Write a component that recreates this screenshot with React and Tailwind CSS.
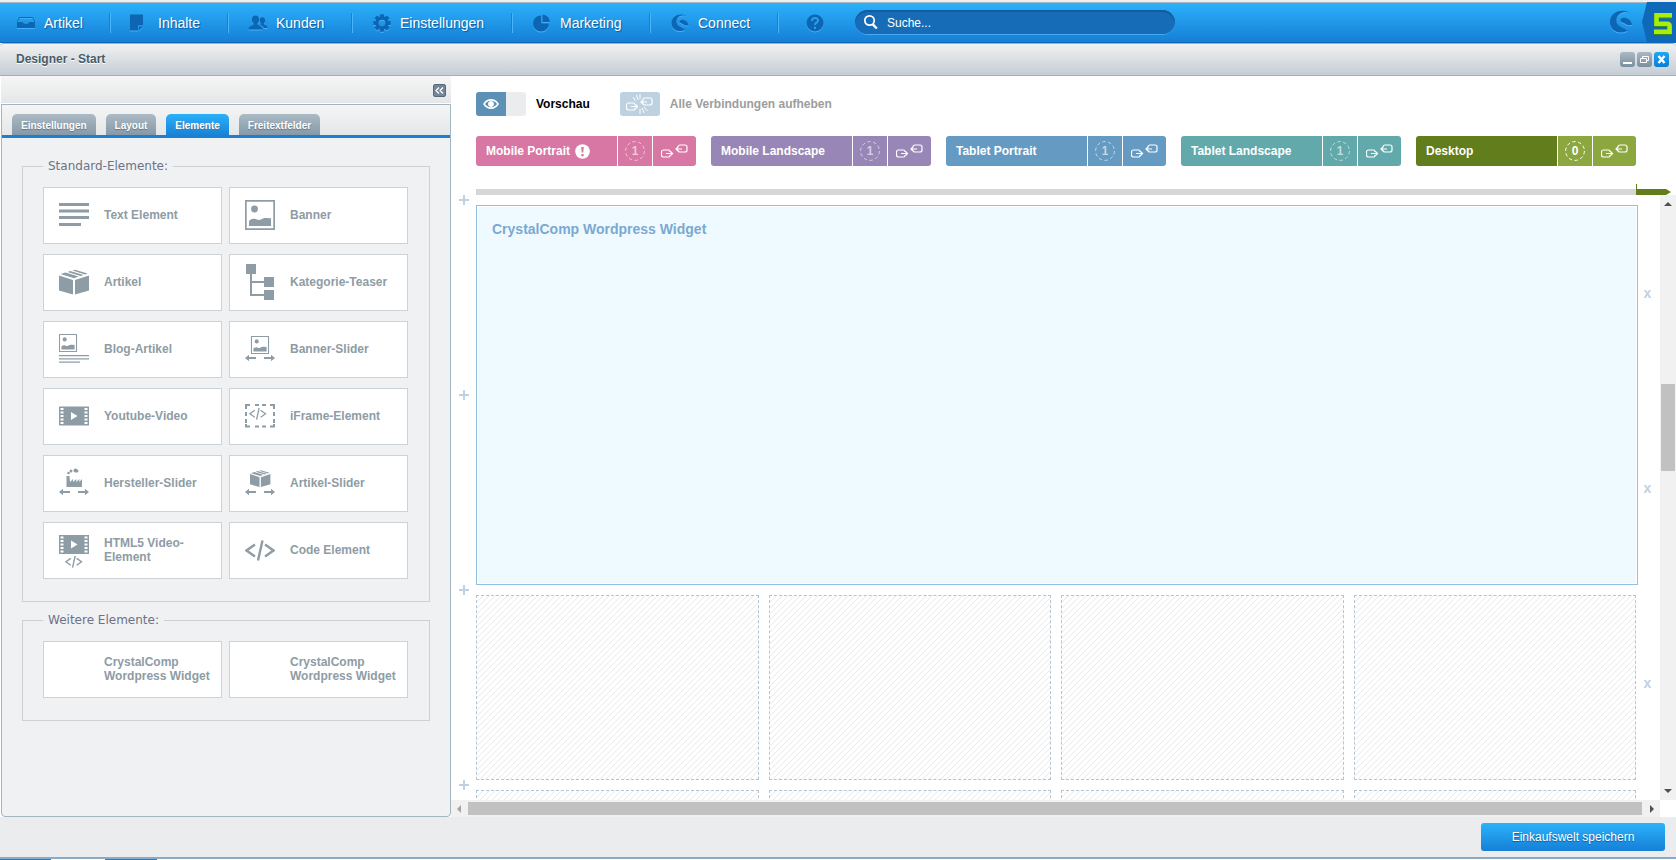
import React from "react";

const INK = "#8e9ca5";

function NavIcon({ kind }) {
  const c = "#0d66b4";
  return (
    <svg width="20" height="20" viewBox="0 0 20 20" fill={c} aria-hidden="true" className="shrink-0 drop-shadow-[0_1px_0_#45b0f7]">
      {kind === "inbox" && (
        <>
          <path d="M3.500 4.500h13l2 4v1h-4.500c-1 0-1.500 2-4 2S7 9.500 6 9.500H1.500v-1z" fill="none" stroke={c} strokeWidth="1" />
          <path d="M1 9h4.800c1 0 1.200 2.400 4.200 2.400s3.200-2.400 4.200-2.400H19v6H1z" />
        </>
      )}
      {kind === "page" && <path d="M0 1.500h13v11H8v5H0zM9 13.500h4l-4 4z" />}
      {kind === "users" && (
        <>
          <path d="M7.500 2.500c2.500 0 3.600 1.700 3.600 4 0 1.700-.6 3-1.500 3.900v1.400c1.500.9 5 1.400 5 4.700H.5c0-3.300 3.500-3.800 5-4.700v-1.400C4.500 9.500 3.900 8.200 3.900 6.500c0-2.300 1.100-4 3.600-4z" />
          <path d="M14.300 4.300c1.900 0 2.800 1.300 2.800 3.100 0 1.300-.5 2.300-1.200 3v1c1.200.7 3.600 1 3.600 3.700h-3.600c-.8-1.800-2.500-2.500-3.700-3.100l.5-2c-.7-.8-.9-1.700-.9-2.600 0-1.800.7-3.100 2.500-3.100z" />
        </>
      )}
      {kind === "gear" && (
        <>
          {[0, 45, 90, 135, 180, 225, 270, 315].map((a) => (
            <rect key={a} x="8" y="1.300" width="4" height="4" rx=".6" transform={`rotate(${a} 10 10)`} />
          ))}
          <circle cx="10" cy="10" r="5" fill="none" stroke={c} strokeWidth="3.400" />
        </>
      )}
      {kind === "pie" && <path d="M9 2.500v8h8a8 8 0 1 1-8-8zM10.500 1.500a8 8 0 0 1 7.500 7.500h-7.500z" />}
      {kind === "help" && (
        <>
          <circle cx="10" cy="10" r="8.500" />
          <path d="M7 8c0-4 6-4 6-.6C13 9.600 10 9.700 10 12M10 13.700v2.200" fill="none" stroke="#2a9ff0" strokeWidth="2" />
        </>
      )}
      {kind === "swirl" && <Swirl />}
    </svg>
  );
}

function Swirl() {
  return (
    <>
      <path d="M16.300 2.900C11 1 6.400 4.300 6.500 9c.1 4.300 4.700 5 8.700 7.600C10.500 19.800 1.500 18 1.500 10 1.500 2.500 10.500-.7 16.300 2.900z" />
      <path d="M9.500 8.800C9.500 5.500 17 6 18.600 12c-2 1.300-4 .2-5.600-.8-1.700-1-3.500-1-3.500-2.400z" />
    </>
  );
}

const NAV = [
  ["Artikel", "inbox", "w-[110px] pl-4"],
  ["Inhalte", "page", "w-[118px] pl-5"],
  ["Kunden", "users", "w-[124px] pl-5"],
  ["Einstellungen", "gear", "w-40 pl-5"],
  ["Marketing", "pie", "w-[138px] pl-5"],
  ["Connect", "swirl", "w-32 pl-5"],
];

function TopBar() {
  return (
    <header className="flex h-[43px] shrink-0 items-center border-t-2 border-b border-t-[#efefef] border-b-[#0c67b5] bg-linear-to-b from-[#2cb2fb] to-[#167fd6] shadow-[inset_0_1px_0_#a4b9c6]">
      <nav className="flex h-[22px] items-end">
        {NAV.map(([label, icon, size]) => (
          <a key={label} href="#" className={`flex h-5 items-center gap-2 border-r border-[#1b7fca] text-sm text-white shadow-[1px_0_0_#4ab5f8] [text-shadow:1px_1px_1px_#0c5a9e] ${size}`}>
            <NavIcon kind={icon} />
            {label}
          </a>
        ))}
        <a href="#" aria-label="Hilfe" className="flex w-[77px] items-center pl-[27px]">
          <NavIcon kind="help" />
        </a>
      </nav>
      <label className="flex h-[25px] w-80 items-center gap-2 rounded-full border-b border-[#47a9ee] bg-[#176cb8] pl-2 shadow-[inset_0_2px_1px_#145c9c]">
        <svg width="16" height="16" viewBox="0 0 16 16" fill="none" stroke="#fff" aria-hidden="true">
          <circle cx="6.500" cy="6.500" r="4.700" strokeWidth="1.700" />
          <path d="M9.800 10.300l4 4.200" strokeWidth="2.400" />
        </svg>
        <input aria-label="Suche" placeholder="Suche..." className="w-60 bg-transparent pt-[2px] text-xs text-white outline-none placeholder:text-white" />
      </label>
      <div className="ml-auto flex h-10 items-center">
        <svg width="26" height="26" viewBox="0 0 20 20" fill="#0d66b4" aria-hidden="true" className="mr-2 drop-shadow-[0_1px_0_#45b0f7]"><Swirl /></svg>
        <svg width="34" height="40" viewBox="0 0 34 40" aria-label="5">
          <path d="M5 0h29v40H5L0 20z" fill="#0f68b8" />
          <path d="M30 14.300H14.500v8.500H25q2.600 0 2.600 2.400v5.500H12" fill="none" stroke="#3f8a1c" strokeWidth="4.500" />
          <path d="M30 13.300H14.500v8.500H25q2.600 0 2.600 2.400v5.500H12" fill="none" stroke="#a8ee0c" strokeWidth="4.500" />
        </svg>
      </div>
    </header>
  );
}

function WindowTitle() {
  return (
    <div className="flex h-[33px] shrink-0 items-center justify-between rounded-t border-t border-b border-t-[#9db3c3] border-b-[#9fb1bf] bg-linear-to-b from-[#f1f1f1] to-[#c5cdd5] pr-[7px] pb-px pl-4">
      <h1 className="text-xs font-bold text-[#475c6a] [text-shadow:0_1px_0_#fff]">Designer - Start</h1>
      <div className="flex gap-[2px]">
        <button aria-label="Minimieren" className="h-[15px] w-[15px] rounded-[3px] bg-linear-to-b from-[#a9b8c4] to-[#7b8f9f]">
          <svg width="15" height="15" aria-hidden="true"><path d="M3 10h9v2H3z" fill="#fff" /></svg>
        </button>
        <button aria-label="Wiederherstellen" className="h-[15px] w-[15px] rounded-[3px] bg-linear-to-b from-[#a9b8c4] to-[#7b8f9f]">
          <svg width="15" height="15" fill="none" stroke="#fff" aria-hidden="true"><path d="M3.500 6.500h6v4h-6zM5.500 6V4.500h6v4H10" /></svg>
        </button>
        <button aria-label="Schließen" className="h-[15px] w-[15px] rounded-[3px] bg-linear-to-b from-[#1fa8f6] to-[#0c7cd5]">
          <svg width="15" height="15" stroke="#fff" strokeWidth="2.400" aria-hidden="true"><path d="M4.500 4l6 7M10.500 4l-6 7" /></svg>
        </button>
      </div>
    </div>
  );
}

const Picture = ({ x, y, s }) => (
  <g transform={`translate(${x} ${y}) scale(${s})`}>
    <path d="M.8.8h28.400v28.400H.8z" fill="none" stroke={INK} strokeWidth="1.800" />
    <circle cx="9.500" cy="9" r="3.400" />
    <path d="M4 26v-5c2-2.500 5-3 8-1.500 3 1 4-.2 6-1 3-1.200 5 .3 8-.5v8z" />
  </g>
);
const Arrows = ({ y }) => (
  <g transform={`translate(0 ${y})`}>
    <path d="M0 3l4-3.200V2h7v2H4v2.200zM30 3l-4-3.200V2h-7v2h7v2.200z" />
  </g>
);
const Box = ({ x, y, s }) => (
  <g transform={`translate(${x} ${y}) scale(${s})`}>
    <path d="M0 6l14 4.500V25L0 21zM30 6l-14 4.500V25l14-4zM1.500 4.600l5-1.600 13 4-4.500 1.800zM8.500 2.500l2.700-.9 13.300 4-3 1zM13.500 1l2.500-.8 12.500 3.900-2.500.9z" />
  </g>
);
const Film = ({ y }) => (
  <g transform={`translate(0 ${y})`}>
    <path d="M0 0h30v19H0z" />
    <path d="M12 5.500l6.500 4-6.500 4z" fill="#fff" />
    {[1.5, 5, 8.500, 12, 15.500].map((v) => (
      <path key={v} d={`M1.500 ${v}h3v2h-3zM25.500 ${v}h3v2h-3z`} fill="#fff" />
    ))}
  </g>
);
const Code = ({ x, y, s, w }) => (
  <g transform={`translate(${x} ${y}) scale(${s})`} fill="none" stroke={INK} strokeWidth={w}>
    <path d="M10 4L1.500 10l8.500 6M20 4l8.500 6-8.500 6M17.500 0l-4.500 20" />
  </g>
);

function ElementIcon({ kind }) {
  return (
    <svg width="30" height="36" viewBox="0 0 30 36" fill={INK} aria-hidden="true" className="shrink-0">
      {kind === "text" && <path d="M0 6h30v3H0zM0 12.500h30v3H0zM0 19h30v3H0zM0 26h22v3H0z" />}
      {kind === "banner" && <Picture x="0" y="3" s="1" />}
      {kind === "box" && <Box x="0" y="5.500" s="1" />}
      {kind === "tree" && <path d="M1 0h10v10H7v7h12V13h10v10H19v-4H7v11h12V26h10v10H19v-4H5V10H1z" />}
      {kind === "blog" && (
        <>
          <Picture x="0" y="3" s=".6" />
          <path d="M0 24h30v1.300H0zM0 27.300h30v1.300H0zM0 30.500h21v1.300H0z" />
        </>
      )}
      {kind === "bannerSlider" && (
        <>
          <Picture x="6" y="5" s=".6" />
          <Arrows y="24" />
        </>
      )}
      {kind === "film" && <Film y="8.500" />}
      {kind === "iframe" && (
        <>
          <path d="M1 11V7h4M10 7h4M17 7h4M25 7h4v4M29 14v4M29 21v4M1 14v4M1 21v4M1 26v2.500h4M10 28.500h4M17 28.500h4M25 28.500h4V26" fill="none" stroke={INK} strokeWidth="2" />
          <Code x="4" y="10" s=".58" w="2.200" />
        </>
      )}
      {kind === "factory" && (
        <>
          <path d="M7.500 22V11h3l.5 6 3-3v3l3.300-3v3l3-3v3l2.700-3v8z" />
          <circle cx="9.500" cy="8" r="1.300" />
          <circle cx="12" cy="6" r="1.500" />
          <circle cx="16.500" cy="5.500" r="2" />
          <circle cx="18" cy="6" r="1.500" />
          <Arrows y="24" />
        </>
      )}
      {kind === "boxSlider" && (
        <>
          <Box x="5" y="5" s=".68" />
          <Arrows y="24" />
        </>
      )}
      {kind === "html5" && (
        <>
          <Film y="3" />
          <Code x="6" y="24" s=".58" w="2.400" />
        </>
      )}
      {kind === "code" && <Code x="0" y="8.500" s="1" w="2.400" />}
    </svg>
  );
}

function ElementCard({ label, icon }) {
  return (
    <button className="flex h-[57px] items-center gap-[15px] border border-[#ccd2d6] bg-white pr-2 pb-[2px] pl-[15px] text-left text-xs leading-[14px] font-bold text-[#8e9ca5]">
      <ElementIcon kind={icon} />
      <span>{label}</span>
    </button>
  );
}

function ElementGroup({ title, items }) {
  return (
    <fieldset className="border border-[#ccd1d6] pr-[21px] pb-[22px] pl-5">
      <legend className="h-4 px-[5px] font-['DejaVu_Sans'] text-xs leading-4 text-[#6c7189]">{title}</legend>
      <div className="grid grid-cols-2 gap-x-[7px] gap-y-[10px] pt-[13px]">
        {items.map(([label, icon], i) => (
          <ElementCard key={i} label={label} icon={icon} />
        ))}
      </div>
    </fieldset>
  );
}

const STANDARD = [
  ["Text Element", "text"],
  ["Banner", "banner"],
  ["Artikel", "box"],
  ["Kategorie-Teaser", "tree"],
  ["Blog-Artikel", "blog"],
  ["Banner-Slider", "bannerSlider"],
  ["Youtube-Video", "film"],
  ["iFrame-Element", "iframe"],
  ["Hersteller-Slider", "factory"],
  ["Artikel-Slider", "boxSlider"],
  ["HTML5 Video-Element", "html5"],
  ["Code Element", "code"],
];
const MORE = [["CrystalComp Wordpress Widget"], ["CrystalComp Wordpress Widget"]];

const TABS = ["Einstellungen", "Layout", "Elemente", "Freitextfelder"];

function Sidebar() {
  return (
    <aside className="flex w-[451px] shrink-0 flex-col pl-px">
      <div className="flex h-7 items-center justify-end border-b border-white bg-linear-to-b from-[#f6f6f6] to-[#e5e6e8] pt-[2px] pr-[5px]">
        <button aria-label="Einklappen" className="h-[13px] w-[13px] rounded-[2px] border border-[#596b79] bg-[#74879a]">
          <svg width="11" height="11" fill="none" stroke="#fff" strokeWidth="1.200" aria-hidden="true"><path d="M5 2.500l-3 3 3 3M9 2.500l-3 3 3 3" /></svg>
        </button>
      </div>
      <div className="flex flex-1 flex-col rounded-b border border-[#a4b5c2] bg-[#f0f1f3]">
        <div role="tablist" className="flex h-[33px] items-end gap-[10px] border-b-[3px] border-[#1b7fd2] bg-linear-to-b from-[#f5f5f5] to-[#e4e6e8] pl-[10px]">
          {TABS.map((t) => (
            <button
              key={t}
              role="tab"
              aria-selected={t === "Elemente"}
              className={`h-[21px] rounded-t-[5px] px-[9px] pt-px text-[10px] font-bold text-white [text-shadow:0_1px_1px_#5f7383] ${t === "Elemente" ? "bg-linear-to-b from-[#2cb0fa] to-[#1883d8]" : "bg-linear-to-b from-[#abbac5] to-[#8799a8]"}`}
            >
              {t}
            </button>
          ))}
        </div>
        <div className="flex flex-col gap-[10px] px-5 pt-5">
          <ElementGroup title="Standard-Elemente:" items={STANDARD} />
          <ElementGroup title="Weitere Elemente:" items={MORE} />
        </div>
      </div>
    </aside>
  );
}

const LinkHalves = ({ dy = 0 }) => (
  <g fill="none" stroke="currentColor" strokeWidth="1.200" transform={`translate(-1 ${dy})`}>
    <path d="M10 9V8.500A1.500 1.500 0 0 0 8.500 7h-5a2 2 0 0 0-2 2v3a2 2 0 0 0 2 2h5a1.500 1.500 0 0 0 1.500-1.500V12M6 10.500h6M10.500 8.500l2 2-2 2" />
    <path d="M18 4.500V4a2 2 0 0 1 2-2h5a2 2 0 0 1 2 2v3a2 2 0 0 1-2 2h-5a2 2 0 0 1-2-1.500M22 6h-6M18 4l-2 2 2 2" />
  </g>
);

function ActionRow() {
  return (
    <div className="flex items-center text-xs font-bold">
      <button aria-pressed="true" aria-label="Vorschau" className="flex h-6 w-[50px] overflow-hidden rounded-[3px] bg-[#ebecee]">
        <span className="flex h-6 w-[30px] items-center justify-center bg-[#5c90b4]">
          <svg width="16" height="12" viewBox="0 0 16 12" fill="none" stroke="#fff" aria-hidden="true">
            <path d="M1 6c3.500-5.500 10.500-5.500 14 0-3.500 5.500-10.500 5.500-14 0z" strokeWidth="1.600" />
            <circle cx="8" cy="6" r="2.500" fill="#fff" />
          </svg>
        </span>
      </button>
      <span className="ml-[10px] text-black">Vorschau</span>
      <button className="ml-[30px] flex items-center gap-[10px] text-[#9d9d9d]">
        <span className="flex h-6 w-10 items-center justify-center rounded-[3px] bg-[#bdd1e1] text-white">
          <svg width="28" height="22" viewBox="0 0 28 22" aria-hidden="true">
            <LinkHalves dy={3} />
            <path d="M7 4l2.500 4M10.500 2L12 7M14 1v5M14 16v5M16 15l2 5M18 14l3.500 4" stroke="#fff" strokeWidth="1" />
          </svg>
        </span>
        Alle Verbindungen aufheben
      </button>
    </div>
  );
}

const DEVICES = [
  ["Mobile Portrait", "1", "bg-[#d876a4]", "bg-[#d876a4]"],
  ["Mobile Landscape", "1", "bg-[#9886b6]", "bg-[#9886b6]"],
  ["Tablet Portrait", "1", "bg-[#659bc2]", "bg-[#659bc2]"],
  ["Tablet Landscape", "1", "bg-[#62a9ab]", "bg-[#62a9ab]"],
  ["Desktop", "0", "bg-[#627d1c]", "bg-[#8ca640]"],
];

function DeviceBar() {
  return (
    <div className="mt-5 grid grid-cols-5 gap-[15px]">
      {DEVICES.map(([label, count, main, side]) => (
        <div key={label} className="flex h-[30px] gap-px overflow-hidden rounded-[3px] text-xs font-bold text-white">
          <button className={`flex flex-1 items-center gap-[5px] pl-[10px] ${main}`}>
            {label}
            {label === "Mobile Portrait" && (
              <svg width="15" height="15" aria-hidden="true">
                <circle cx="7.500" cy="7.500" r="7.300" fill="#fff" />
                <path d="M6.200 3h2.600l-.5 5.500H6.700zM6.300 10h2.400v2.200H6.300z" fill="#d876a4" />
              </svg>
            )}
          </button>
          <button aria-label={`${label} verborgen`} className={`flex w-[34px] items-center justify-center ${side}`}>
            <span className={`relative flex h-5 w-5 items-center justify-center ${count === "1" ? "opacity-60" : ""}`}>
              <svg width="20" height="20" fill="none" stroke="#fff" aria-hidden="true" className="absolute inset-0">
                <circle cx="10" cy="10" r="9.400" strokeDasharray="3.400 2.500" strokeWidth="1" />
              </svg>
              {count}
            </span>
          </button>
          <button aria-label={`${label} verbinden`} className={`flex w-[43px] items-center justify-center ${side}`}>
            <svg width="28" height="16" viewBox="0 0 28 16" aria-hidden="true"><LinkHalves /></svg>
          </button>
        </div>
      ))}
    </div>
  );
}

const CELL =
  "border border-dashed border-[#b5c5d2] bg-[linear-gradient(135deg,transparent_41%,#ebebeb_50%,transparent_59%)] bg-size-[6px_6px]";

function Row({ children, last }) {
  return (
    <div className="flex h-[185px] shrink-0">
      <div className="flex w-[25px] shrink-0 flex-col">
        <button aria-label="Zeile einfügen" className="-mt-[11px] flex h-3 items-center justify-center">
          <svg width="10" height="10" aria-hidden="true"><path d="M5 0v10M0 5h10" stroke="#bfd1e2" strokeWidth="2" /></svg>
        </button>
      </div>
      <div className="grid min-w-0 flex-1 grid-cols-4 gap-[10px]">{children}</div>
      <button aria-label="Zeile entfernen" className="w-6 shrink-0 pr-px pb-[10px] text-sm font-bold text-[#bfd1e2]">{last ? "" : "x"}</button>
    </div>
  );
}

function Canvas() {
  return (
    <div className="grid min-h-0 flex-1 grid-cols-[1fr_16px] grid-rows-[1fr_17px]">
      <div className="relative flex min-h-0 flex-col gap-[10px] overflow-hidden pt-[10px]">
        <Row />
        <Row />
        {[0, 1].map((r) => (
          <Row key={r} last={r === 1}>
            {[0, 1, 2, 3].map((c) => (
              <div key={c} className={CELL} />
            ))}
          </Row>
        ))}
        <section className="absolute top-[10px] right-[22px] left-[25px] h-[380px] border border-[#93c0dc] bg-[#eefaff] px-[15px] py-[13px] shadow-[inset_0_0_0_1px_#fff]">
          <h2 className="text-sm leading-5 font-bold text-[#7ba9d0]">CrystalComp Wordpress Widget</h2>
        </section>
      </div>
      <div className="flex flex-col items-center bg-[#f1f1f1]">
        <svg width="16" height="17" aria-hidden="true"><path d="M4 11l4-4 4 4z" fill="#505050" /></svg>
        <div className="h-[172px]" />
        <div className="h-[87px] w-[14px] bg-[#c1c1c1]" />
        <svg width="16" height="17" className="mt-auto" aria-hidden="true"><path d="M4 6l4 4 4-4z" fill="#505050" /></svg>
      </div>
      <div className="flex items-center bg-[#f1f1f1]">
        <svg width="17" height="17" aria-hidden="true"><path d="M10 5L6 9l4 4z" fill="#a3a3a3" /></svg>
        <div className="h-[13px] flex-1 bg-[#c1c1c1]" />
        <svg width="18" height="17" aria-hidden="true"><path d="M8 5l4 4-4 4z" fill="#505050" /></svg>
      </div>
    </div>
  );
}

function Workspace() {
  return (
    <main className="flex min-w-0 flex-1 flex-col bg-white pt-4">
      <div className="pr-10 pl-[25px]">
        <ActionRow />
        <DeviceBar />
      </div>
      <div className="mt-[18px] flex h-[11px] shrink-0 items-end pr-[5px] pl-[25px]">
        <div className="h-[6px] flex-1 bg-[#d6d6d6]" />
        <svg width="35" height="11" aria-hidden="true"><path d="M0 0h1v5h29l5 3-5 3H0z" fill="#627d1c" /></svg>
      </div>
      <Canvas />
    </main>
  );
}

export default function App() {
  return (
    <div className="flex h-screen flex-col overflow-hidden bg-white font-['Liberation_Sans',Arial,sans-serif]">
      <TopBar />
      <WindowTitle />
      <div className="flex min-h-0 flex-1">
        <Sidebar />
        <Workspace />
      </div>
      <footer className="flex h-[42px] shrink-0 items-start justify-end border-b-2 border-[#8aaac6] bg-[#ebecee] pt-[6px] pr-[11px]">
        <button className="h-7 w-[184px] rounded-[3px] bg-linear-to-b from-[#2cb2fb] to-[#167fd6] text-xs text-white [text-shadow:0_1px_1px_#0c5a9e]">Einkaufswelt speichern</button>
      </footer>
      <div className="flex h-px shrink-0 gap-[54px]">
        <div className="w-[51px] bg-[#1b7fd2]" />
        <div className="w-[52px] bg-[#1b7fd2]" />
      </div>
    </div>
  );
}
